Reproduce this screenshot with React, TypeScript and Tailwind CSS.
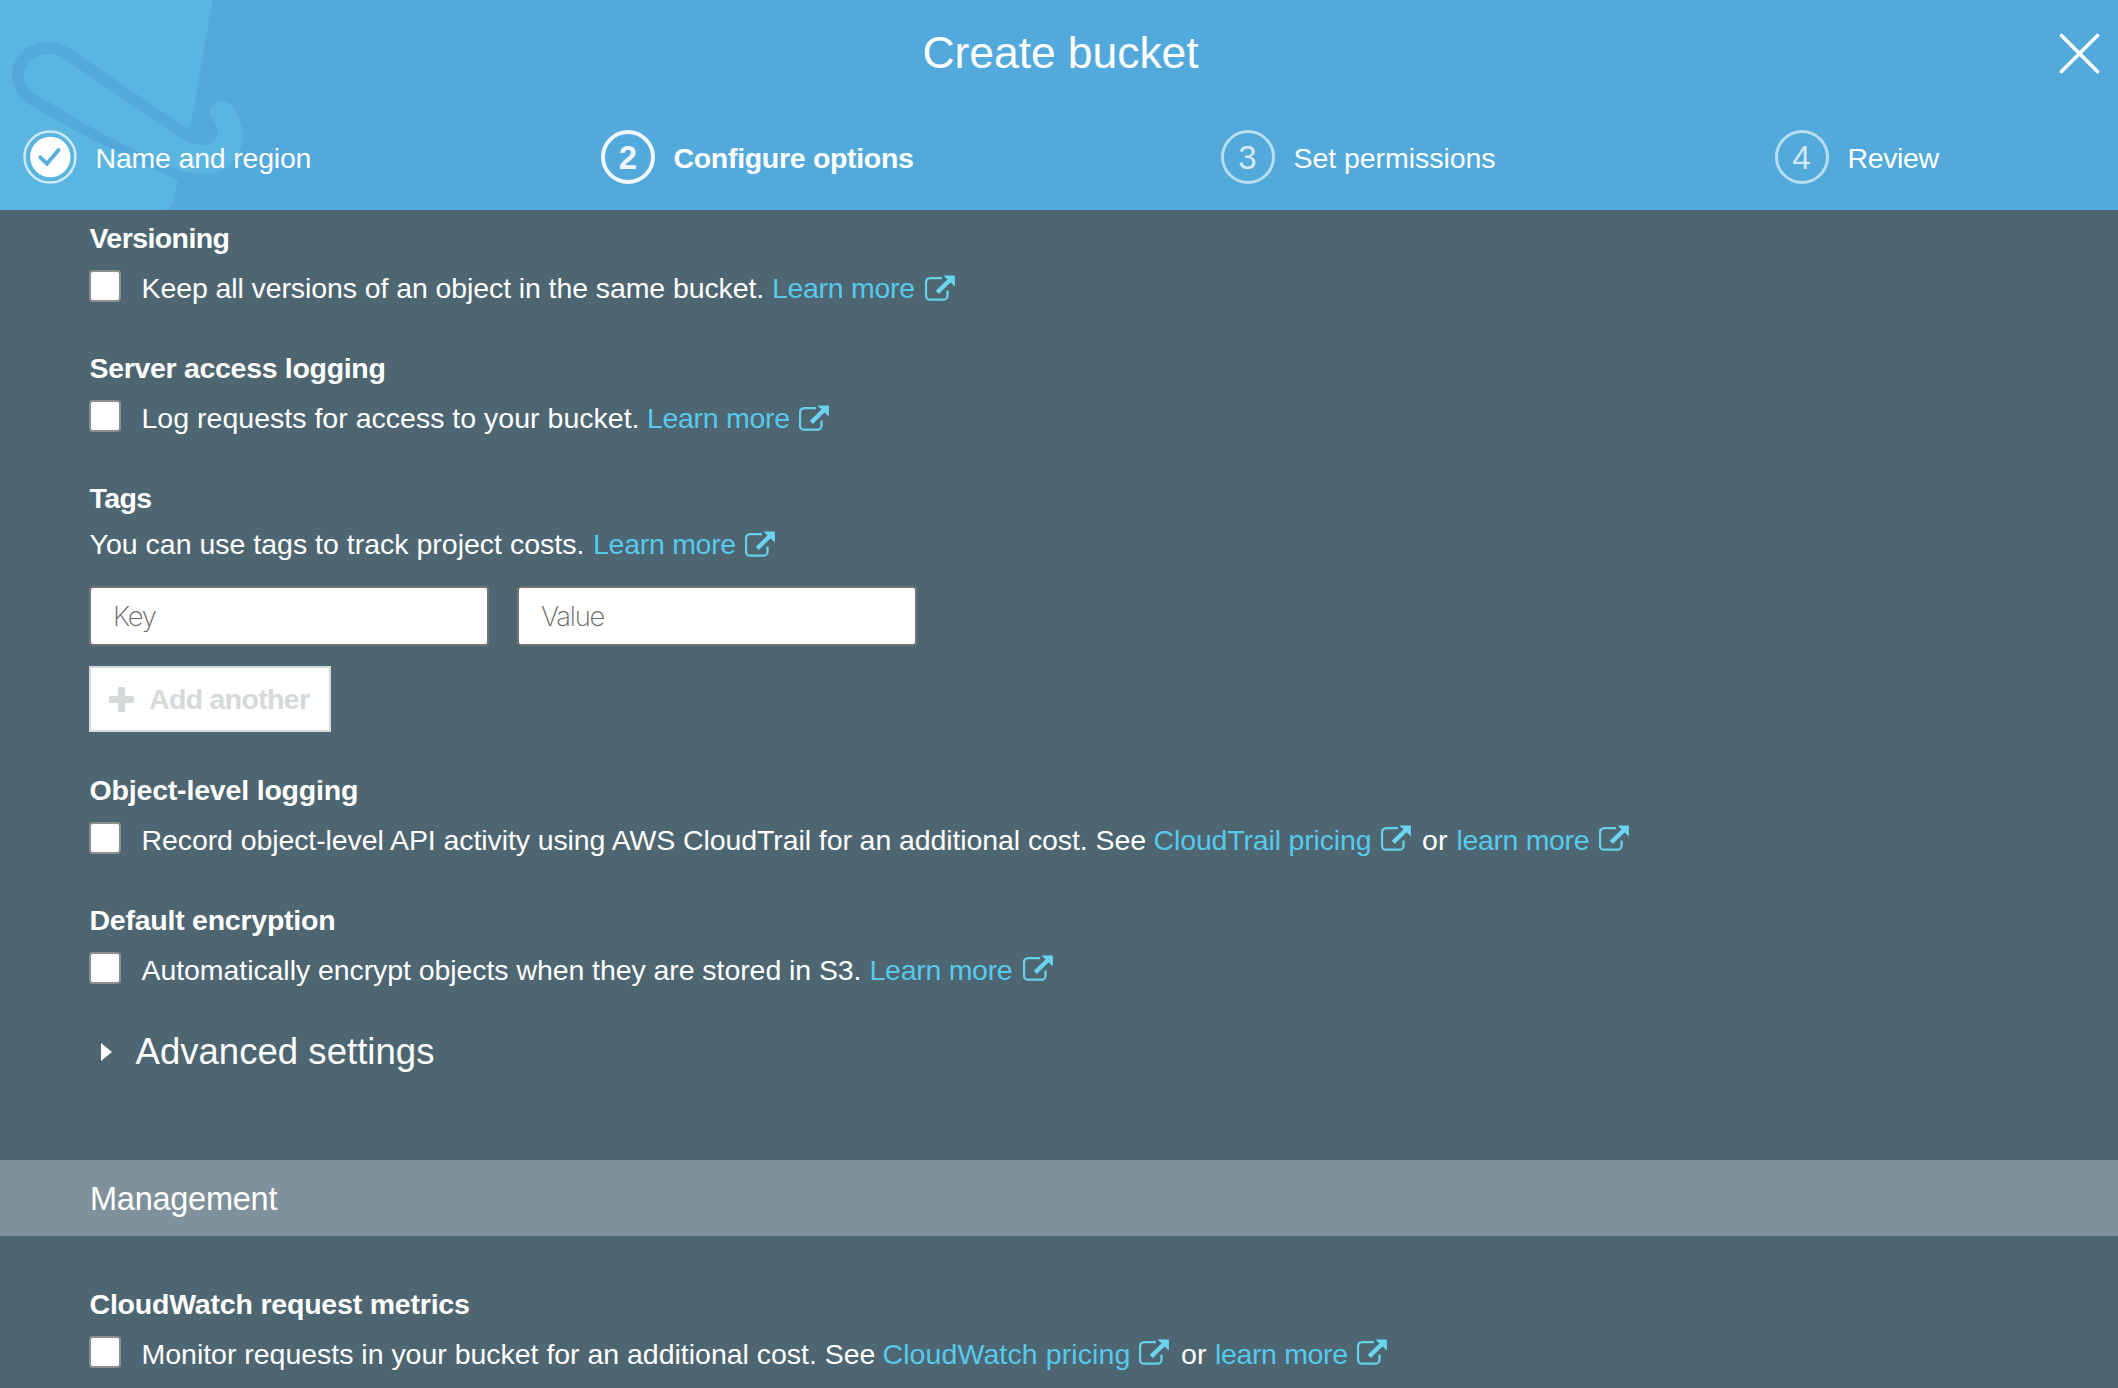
import type { ReactNode } from "react";

function Run({ className = "", children }: { className?: string; children: ReactNode }) {
  return <span className={"block shrink-0 whitespace-nowrap " + className}>{children}</span>;
}

function ExternalIcon({ className = "" }: { className?: string }) {
  return (
    <svg viewBox="0 0 30 26" className={"block h-[26px] w-[30px] shrink-0 " + className} fill="none">
      <path
        d="M17 3.2H5a4 4 0 0 0-4 4V20.700a4 4 0 0 0 4 4H18.500a4 4 0 0 0 4-4V15.500"
        stroke="#68cfec"
        strokeWidth="2.300"
      />
      <path d="M12.300 17.400 25 5" stroke="#6bd5f1" strokeWidth="4.300" />
      <path d="M18.500 .4H29.900V11.600Z" fill="#6bd5f1" />
    </svg>
  );
}

function Checkbox() {
  return (
    <input
      type="checkbox"
      className="block h-8 w-8 shrink-0 appearance-none rounded-[4px] border-2 border-[#8d8f8e] bg-white"
    />
  );
}

function Section({ title, tracking, children }: { title: string; tracking: string; children: ReactNode }) {
  return (
    <section className="pl-[89px]">
      <h3 className={"h-8 pl-[0.500px] font-bold " + tracking}>{title}</h3>
      <div className="mt-4 flex h-[34px] items-start">
        <Checkbox />
        {children}
      </div>
    </section>
  );
}

const link = "mt-0.5 text-[#56c9ec]";

function Header() {
  return (
    <header className="relative h-[210px] overflow-hidden bg-[#52a9db]">
      <svg viewBox="0 0 260 210" className="absolute left-0 top-0 h-[210px] w-[260px]">
        <path d="M0 0H212.500L190 130 178 180 173 200Q171 207 167 210H0Z" fill="#5bb5e1" />
        <path
          d="M190 130C150 104 110 76 72 50 64 45 56 42 48 42 27 42 12 57 12 76 12 88 20 99 32 106 80 135 130 158 178 180H260V130Z"
          fill="#52a9db"
        />
        <path
          d="M48 54C56 54 60 56 66 60 103 85 140 111 175 134 188 143 198 146 207 144.500 220 142 222 130 210 115 209 107 215 101 222 101 233 101 243 120 242.500 139 240 163 222 174 205 174 180 174 165 164 143 154 105 137 68 114 32 92 25 86 24 82 24 76 24 63 35 54 48 54Z"
          fill="#5bb5e1"
        />
      </svg>

      <div className="relative flex h-[130px] pt-[27px]">
        <h1 className="flex-1 pl-[3px] text-center text-[44.500px] leading-[52px] tracking-[-0.080px]">Create bucket</h1>
        <button className="absolute right-[18px] top-[33px]" aria-label="Close">
          <svg viewBox="0 0 41 41" className="block h-[41px] w-[41px]" stroke="white" strokeWidth="3.600" strokeLinecap="round">
            <path d="M2.500 2.500 38.500 38.500M38.500 2.500 2.500 38.500" />
          </svg>
        </button>
      </div>

      <nav className="relative flex h-[54px] items-center pl-[23px]">
        <div className="flex w-[578px] items-center gap-[18.500px]">
          <svg viewBox="0 0 54 54" className="block h-[54px] w-[54px] shrink-0" fill="none">
            <circle cx="27" cy="27" r="25.500" stroke="white" strokeOpacity="0.7" strokeWidth="2.500" />
            <circle cx="27.300" cy="27" r="20.200" fill="white" />
            <path d="M17.300 27.300 24 33.800 35.500 20" stroke="#58afdf" strokeWidth="3.800" strokeLinecap="round" />
          </svg>
          <Run className="pt-0.5 tracking-[-0.190px]">Name and region</Run>
        </div>
        <div className="flex w-[619.500px] items-center gap-[18.500px]">
          <span className="flex h-[54px] w-[54px] shrink-0 items-center justify-center rounded-full border-4 border-white/90 pt-0.5 text-[33px] font-bold text-white/90">
            2
          </span>
          <Run className="pt-0.5 font-bold tracking-[-0.310px]">Configure options</Run>
        </div>
        <div className="flex w-[554px] items-center gap-[19px]">
          <span className="flex h-[54px] w-[54px] shrink-0 items-center justify-center rounded-full border-[3px] border-white/60 pt-0.5 text-[33px] text-white/75">
            3
          </span>
          <Run className="pt-0.5 tracking-[-0.050px]">Set permissions</Run>
        </div>
        <div className="flex items-center gap-[19px]">
          <span className="flex h-[54px] w-[54px] shrink-0 items-center justify-center rounded-full border-[3px] border-white/60 pt-0.5 text-[33px] text-white/75">
            4
          </span>
          <Run className="pt-0.5 tracking-[-0.390px]">Review</Run>
        </div>
      </nav>
    </header>
  );
}

const field =
  "block h-[60px] w-[400px] rounded-[4px] border-2 border-[#757575] bg-white pl-[22px] font-[Inter,sans-serif] text-[27.500px] font-extralight tracking-[-1.300px] text-[#555] placeholder:text-[#666] placeholder:opacity-100";

export default function App() {
  return (
    <div className="h-[1388px] w-full overflow-hidden bg-[#4e6671] font-['Liberation_Sans',Arial,sans-serif] text-[28.500px] leading-8 text-white">
      <Header />
      <main className="pt-3">
        <Section title="Versioning" tracking="tracking-[-0.580px]">
          <Run className="ml-[20.500px] mt-0.5 w-[630.400px] tracking-[-0.095px]">Keep all versions of an object in the same bucket.</Run>
          <Run className={link + " w-[153.100px] tracking-[-0.280px]"}>Learn more</Run>
          <ExternalIcon className="mt-[5px]" />
        </Section>

        <div className="mt-12">
          <Section title="Server access logging" tracking="tracking-[-0.310px]">
            <Run className="ml-[20.500px] mt-0.5 w-[505.400px] tracking-[0.015px]">Log requests for access to your bucket.</Run>
            <Run className={link + " w-[152.100px] tracking-[-0.280px]"}>Learn more</Run>
            <ExternalIcon className="mt-[5px]" />
          </Section>
        </div>

        <section className="mt-12 pl-[89px]">
          <h3 className="h-8 pl-[0.500px] font-bold tracking-[-0.600px]">Tags</h3>
          <div className="mt-3.5 flex h-8 items-start pl-[0.500px]">
            <Run className="w-[503.500px] tracking-[0.003px]">You can use tags to track project costs.</Run>
            <Run className="w-[152px] tracking-[-0.280px] text-[#56c9ec]">Learn more</Run>
            <ExternalIcon className="mt-[3px]" />
          </div>
          <div className="mt-[26px] flex gap-7">
            <input className={field} placeholder="Key" />
            <input className={field} placeholder="Value" />
          </div>
          <button className="mt-5 flex h-[66px] w-[242px] items-center border-2 border-[#d5d9d9] bg-white pl-[18px] font-bold text-[#d5d9d9]">
            <svg viewBox="0 0 25 25" className="mr-[15px] block h-[25px] w-[25px]" fill="currentColor">
              <path d="M10.500 0h4q1.500 0 1.500 1.500V9h7.500q1.500 0 1.500 1.500v4q0 1.500-1.500 1.500H16v7.500q0 1.500-1.500 1.500h-4Q9 25 9 23.500V16H1.500Q0 16 0 14.500v-4Q0 9 1.500 9H9V1.500Q9 0 10.500 0Z" />
            </svg>
            <Run className="tracking-[-0.680px]">Add another</Run>
          </button>
        </section>

        <div className="mt-[42px]">
          <Section title="Object-level logging" tracking="tracking-[-0.180px]">
            <Run className="ml-[20.500px] mt-0.5 w-[1012.100px] tracking-[-0.090px]">
              Record object-level API activity using AWS CloudTrail for an additional cost. See
            </Run>
            <Run className={link + " w-[227.400px] tracking-[-0.160px]"}>CloudTrail pricing</Run>
            <ExternalIcon className="mt-[3px]" />
            <Run className="ml-[11px] mt-0.5 w-[34.500px] tracking-[0.200px]">or</Run>
            <Run className={link + " w-[142.500px] tracking-[-0.350px]"}>learn more</Run>
            <ExternalIcon className="mt-[3px]" />
          </Section>
        </div>

        <div className="mt-12">
          <Section title="Default encryption" tracking="tracking-[-0.240px]">
            <Run className="ml-[20.500px] mt-0.5 w-[728px] tracking-[-0.070px]">
              Automatically encrypt objects when they are stored in S3.
            </Run>
            <Run className={link + " w-[153.500px] tracking-[-0.280px]"}>Learn more</Run>
            <ExternalIcon className="mt-[3px]" />
          </Section>
        </div>

        <div className="mt-[46px] flex h-10 items-center pl-[101px]">
          <svg viewBox="0 0 11 18" className="block h-[18px] w-[11px]">
            <path d="M0 0 11 9 0 18Z" fill="white" />
          </svg>
          <Run className="ml-[23.500px] text-[36.500px] leading-10 tracking-[0.040px]">Advanced settings</Run>
        </div>

        <div className="mt-[88px] h-[76px] bg-[#7f919a] pl-[90px] pt-px text-[32.500px] leading-[76px] tracking-[-0.250px]">
          Management
        </div>

        <div className="mt-[52px]">
          <Section title="CloudWatch request metrics" tracking="tracking-[-0.200px]">
            <Run className="ml-[20.500px] mt-0.5 w-[741px] tracking-[-0.020px]">
              Monitor requests in your bucket for an additional cost. See
            </Run>
            <Run className={link + " w-[256.500px] tracking-[0.100px]"}>CloudWatch pricing</Run>
            <ExternalIcon className="mt-[3px]" />
            <Run className="ml-3 mt-0.5 w-[34px] tracking-[0.200px]">or</Run>
            <Run className={link + " w-[142px] tracking-[-0.350px]"}>learn more</Run>
            <ExternalIcon className="mt-[3px]" />
          </Section>
        </div>
      </main>
    </div>
  );
}
